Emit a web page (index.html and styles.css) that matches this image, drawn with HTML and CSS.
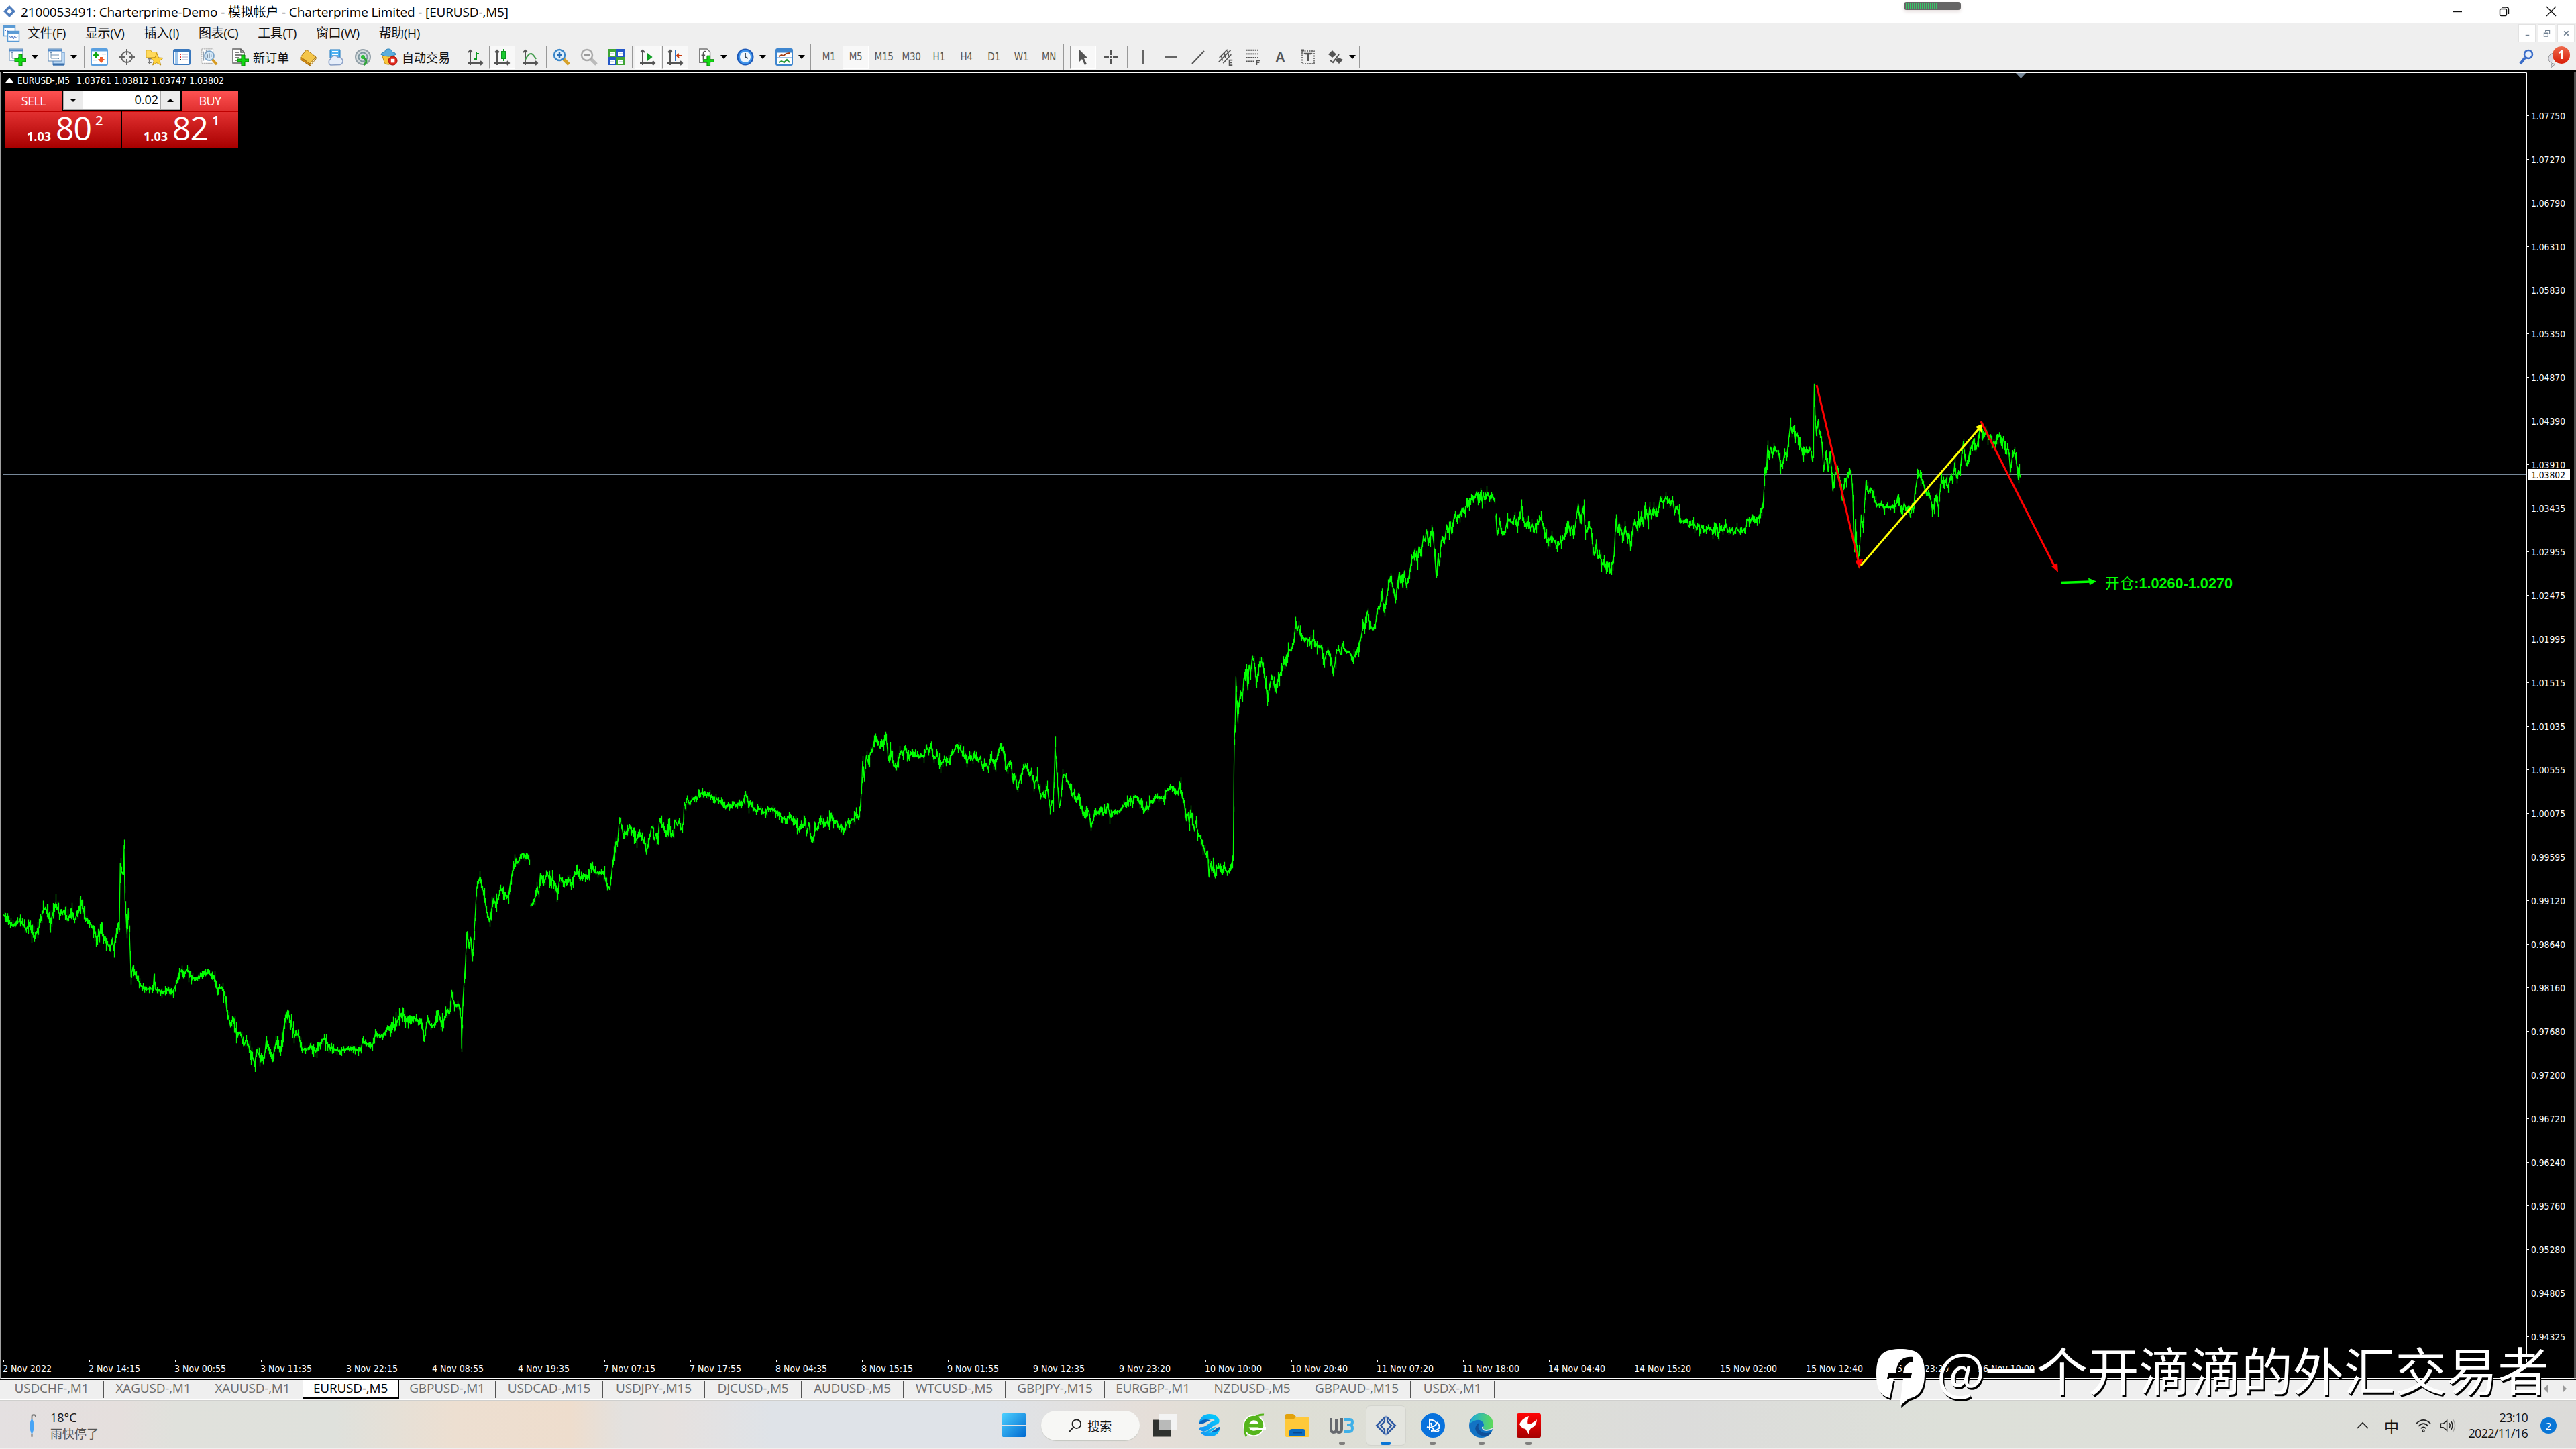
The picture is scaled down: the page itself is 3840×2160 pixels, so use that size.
FILE: index.html
```html
<!DOCTYPE html>
<html lang="zh-CN">
<head>
    <meta charset="UTF-8">
    <title>2100053491: Charterprime-Demo - [EURUSD-,M5]</title>
    <link rel="stylesheet" href="styles.css">
</head>
<body>
    <!-- Title bar -->
    <div class="titlebar">
        <svg class="app-icon" viewBox="0 0 20 20"><path d="M10 1l9 9-9 9-9-9z" fill="#4f7dbd"/><path d="M10 6l4 4-4 4-4-4z" fill="#fff"/></svg>
        <span class="title-text">2100053491: Charterprime-Demo - 模拟帐户 - Charterprime Limited - [EURUSD-,M5]</span>
        <div class="window-buttons">
            <svg viewBox="0 0 16 16"><path d="M1 8.500h14"/></svg>
            <svg viewBox="0 0 16 16"><rect x="1.500" y="4.500" width="10" height="10" rx="2"/><path d="M4 2h7q3.500 0 3.500 3.500V12"/></svg>
            <svg viewBox="0 0 16 16"><path d="M1 1l14 14M15 1L1 15"/></svg>
        </div>
    </div>
    <div class="meter"><span></span></div>

    <!-- Menu bar -->
    <div class="menubar">
        <svg class="menu-icon" viewBox="0 0 26 26"><g fill="#fff" stroke="#5b9bd5" stroke-width="1.500"><rect x="1.500" y="1.500" width="17" height="15"/><rect x="7.500" y="9.500" width="17" height="15"/></g><path d="M1 3.500h18M7 11.500h18" stroke="#5b9bd5" stroke-width="3"/><path d="M10 16l2 4 2-3 2 4 2-5 2 4 2-3M4 9l2-2 2 3 3-3" fill="none" stroke="#4472c4"/></svg>
        <span>文件(F)</span>
        <span>显示(V)</span>
        <span>插入(I)</span>
        <span>图表(C)</span>
        <span>工具(T)</span>
        <span>窗口(W)</span>
        <span>帮助(H)</span>
        <div class="mdi-buttons">
            <b><svg viewBox="0 0 12 12"><path d="M3 9.500h6" stroke-width="2"/></svg></b>
            <b><svg viewBox="0 0 12 12"><path d="M4 4V1.500h6.500V7H8M1.500 5.500H8V11H1.500zM1.500 6.500H8" stroke-width="1.200"/></svg></b>
            <b><svg viewBox="0 0 12 12"><path d="M2.500 2.500l7 7M9.500 2.500l-7 7" stroke-width="2"/></svg></b>
        </div>
    </div>

    <!-- Toolbar -->
    <div class="toolbar">
        <i class="grip"></i>
        <div class="drop">
            <svg viewBox="0 0 26 26"><rect x="1" y="1" width="20" height="17" fill="#fff" stroke="#5b87b5"/><path d="M1 3h20" stroke="#4a86c8" stroke-width="3"/><path d="M5 6v9h11M3 8l2-2 2 2M14 13l2 2-2 2" fill="none" stroke="#6d8fb0"/><path d="M15 9h5v6h6v5h-6v6h-5v-6H9v-5h6z" fill="#12d812" stroke="#078007"/></svg>
            <em></em>
        </div>
        <div class="drop">
            <svg viewBox="0 0 26 26"><path d="M8 6h17v19H8z" fill="#bcd9f5" stroke="#4a86c8"/><path d="M8 24h17" stroke="#3a6faa" stroke-width="3"/><rect x="1" y="1" width="20" height="18" fill="#fff" stroke="#5b87b5"/><path d="M1 3h20" stroke="#4a86c8" stroke-width="3"/><path d="M5 6v9h12M3 8l2-2 2 2M5 10h12M15 13l2 2-2 2" fill="none" stroke="#6d8fb0"/></svg>
            <em></em>
        </div>
        <i class="sep w5"></i>
        <div class="btn"><svg viewBox="0 0 26 26"><rect x="1" y="1" width="24" height="24" rx="2" fill="#fff" stroke="#5ba0e0" stroke-width="2"/><path d="M1 3h24" stroke="#5ba0e0" stroke-width="3"/><path d="M8 5l5 6h-3v3H6v-3H3z" fill="#12a812"/><path d="M16 22l5-6h-3v-3h-4v3h-3z" fill="#f05a28"/><path d="M3 18h6M17 9h6" stroke="#cde"/></svg></div>
        <div class="btn"><svg viewBox="0 0 26 26" fill="none" stroke="#666" stroke-width="2"><circle cx="13" cy="13" r="8"/><path d="M13 1v9M13 16v9M1 13h9M16 13h9"/></svg></div>
        <div class="btn"><svg viewBox="0 0 28 26"><path d="M1 2h7l2 3h8v9H1z" fill="#ffd95a" stroke="#c99a1a"/><path d="M6 15v9M4 16h8M4 22h6" stroke="#777" stroke-dasharray="2 1.500" stroke-width="1.500"/><path d="M18 7l3 7 7 .6-5.300 4.700L24.500 26 18 22.300 11.500 26l1.800-6.700L8 14.600l7-.6z" fill="#ffd23c" stroke="#b98a10"/></svg></div>
        <div class="btn"><svg viewBox="0 0 26 26"><rect x="1" y="2" width="24" height="22" rx="2" fill="#fff" stroke="#3a78bd" stroke-width="2"/><path d="M1 4h24" stroke="#3a78bd" stroke-width="3"/><path d="M3 6h4v17H3z" fill="#9fc6ec"/><path d="M10 9h2M10 13h2" stroke="#e33" stroke-width="2"/><path d="M10 17h2" stroke="#222" stroke-width="2"/><path d="M14 9h8M14 13h8M14 17h8" stroke="#aac"/></svg></div>
        <div class="btn"><svg viewBox="0 0 28 28"><path d="M2 1h18v23H2z" fill="#fff" stroke="#999" stroke-dasharray="2 1"/><path d="M5 5v15M9 3v13" stroke="#789"/><circle cx="14" cy="12" r="7.500" fill="#cfe5f7" fill-opacity=".9" stroke="#7aa3c8" stroke-width="2"/><path d="M14 8v8M11 10v5M17 10v4" stroke="#567"/><path d="M19 18l7 8" stroke="#d69a20" stroke-width="4"/></svg></div>
        <i class="sep w7"></i>
        <div class="btn-text w99"><span class="ico"><svg viewBox="0 0 26 26"><path d="M2 1h12l5 5v16H2z" fill="#fff" stroke="#666" stroke-width="1.500"/><path d="M14 1v5h5M5 6h6M5 10h10M5 14h7M5 18h5" fill="none" stroke="#555" stroke-width="1.500"/><path d="M15 10h5v6h6v4h-6v6h-5v-6h-6v-4h6z" fill="#12d812" stroke="#078007"/></svg></span>新订单</div>
        <div class="btn"><svg viewBox="0 0 26 26"><path d="M11 2l14 11-9 10L2 13z" fill="#f4c64a" stroke="#a87412"/><path d="M2 13l14 10v3L2 17z" fill="#d28a14" stroke="#a87412"/><path d="M16 23l9-10v3l-9 10z" fill="#fff3c4" stroke="#a87412"/></svg></div>
        <div class="btn"><svg viewBox="0 0 26 26"><path d="M5 2h15v13H5z" fill="#4fb2f3" stroke="#1c78c0"/><path d="M8 5h9M8 9h9" stroke="#fff" stroke-width="2"/><path d="M6 25a5 5 0 010-9 6 6 0 0111-2 5 5 0 013 10.500z" fill="#e6eefa" stroke="#8aa0c6" stroke-width="1.500"/></svg></div>
        <div class="btn"><svg viewBox="0 0 26 26" fill="none"><circle cx="13" cy="13" r="11" fill="#d6dde0" stroke="#93a0a8" stroke-width="2"/><circle cx="13" cy="13" r="6.500" stroke="#7d97a0" stroke-width="2"/><circle cx="13" cy="13" r="3" fill="#2fbf3a"/><path d="M14 14q8 5 0 11" stroke="#2fa338" stroke-width="3"/></svg></div>
        <div class="btn-text w116"><span class="ico"><svg viewBox="0 0 28 28"><path d="M3 12h20l-4 12q-6 4-12 0z" fill="#f8c63c" stroke="#b8860b"/><path d="M1 10q1-4 6-4 1-5 6-5t6 5q5 0 6 4-12 6-24 0z" fill="#5aaede" stroke="#2a7fb5"/><circle cx="20" cy="20" r="7" fill="#e0261a" stroke="#a01008"/><path d="M17 17h6v6h-6z" fill="#fff"/></svg></span>自动交易</div>
        <i class="sep w11 gripped"></i>
        <div class="btn"><svg viewBox="0 0 26 26" fill="none" stroke="#555" stroke-width="2"><path d="M5 3v22M1 22h22M2 6l3-3 3 3M20 19l3 3-3 3"/><path d="M14 6v12M14 8h4M10 16h4" stroke="#0c9a20"/></svg></div>
        <div class="btn pressed"><svg viewBox="0 0 26 26" fill="none" stroke="#555" stroke-width="2"><path d="M5 3v22M1 22h22M2 6l3-3 3 3M20 19l3 3-3 3"/><path d="M15 1v18" stroke="#0c9a20"/><path d="M12 5h6v10h-6z" fill="#19c92e" stroke="#0c9a20"/></svg></div>
        <div class="btn"><svg viewBox="0 0 26 26" fill="none" stroke="#555" stroke-width="2"><path d="M5 3v22M1 22h22M2 6l3-3 3 3M20 19l3 3-3 3"/><path d="M5 17q5-10 9-9 3 1 7 8" stroke="#3f9a4a"/></svg></div>
        <i class="sep w5"></i>
        <div class="btn"><svg viewBox="0 0 26 26"><path d="M16 16l8 8" stroke="#d6a12a" stroke-width="5"/><circle cx="10" cy="10" r="8" fill="#dff0fc" stroke="#3a86c8" stroke-width="2.500"/><path d="M6 10h8M10 6v8" stroke="#2a70b8" stroke-width="2.500"/></svg></div>
        <div class="btn"><svg viewBox="0 0 26 26"><path d="M16 16l8 8" stroke="#bbb" stroke-width="5"/><circle cx="10" cy="10" r="8" fill="#f2f2f2" stroke="#aaa" stroke-width="2.500"/><path d="M6 10h8" stroke="#999" stroke-width="2.500"/></svg></div>
        <div class="btn"><svg viewBox="0 0 26 26"><path d="M1 1h12v12H1zM13 13h12v12H13z" fill="#3fa535"/><path d="M13 1h12v12H13zM1 13h12v12H1z" fill="#2458c8"/><path d="M3 6h8v5H3zM15 6h8v5h-8zM3 18h8v5H3zM15 18h8v5h-8z" fill="#fff"/><path d="M4 8h6M16 8h6M4 20h6M16 20h6" stroke="#9bc"/></svg></div>
        <i class="sep w7"></i>
        <div class="btn pressed"><svg viewBox="0 0 26 26" fill="none" stroke="#555" stroke-width="2"><path d="M5 3v22M1 22h22M2 6l3-3 3 3M20 19l3 3-3 3"/><path d="M13 9v8l5-4z" fill="#19c92e" stroke="#0c9a20"/></svg></div>
        <div class="btn pressed"><svg viewBox="0 0 26 26" fill="none" stroke="#555" stroke-width="2"><path d="M5 3v22M1 22h22M2 6l3-3 3 3M20 19l3 3-3 3"/><path d="M13 3v16" stroke="#2a70c8"/><path d="M22 11h-7M18 8l-3 3 3 3" stroke="#c8380a"/></svg></div>
        <i class="sep w5"></i>
        <div class="drop"><svg viewBox="0 0 26 28"><path d="M2 1h12l5 5v17H2z" fill="#fff" stroke="#777" stroke-width="1.500"/><path d="M12 5q-4-1-4 4v9M5 11h6" fill="none" stroke="#555" stroke-width="1.500"/><path d="M14 12h5v6h6v4h-6v6h-5v-6H8v-4h6z" fill="#12d812" stroke="#078007"/></svg><em></em></div>
        <div class="drop"><svg viewBox="0 0 26 26"><circle cx="13" cy="13" r="12.500" fill="#1c58b8"/><circle cx="13" cy="13" r="10.500" fill="#3f93ea"/><circle cx="13" cy="13" r="8" fill="#eef6fd"/><path d="M13 7v6l4 2" fill="none" stroke="#345" stroke-width="1.800"/></svg><em></em></div>
        <div class="drop"><svg viewBox="0 0 26 26"><rect x="1" y="1" width="24" height="24" rx="2" fill="#fff" stroke="#3f86cf" stroke-width="2"/><path d="M1 4h24" stroke="#3f86cf" stroke-width="5"/><path d="M1 14h24" stroke="#3f86cf"/><path d="M5 12l4-2 3 1 4-3 5-1" fill="none" stroke="#a33a10" stroke-width="2"/><path d="M5 21l4-2 4 2 4-4 4 4" fill="none" stroke="#2a9a3a" stroke-width="2"/></svg><em></em></div>
        <i class="sep w8 gripped"></i>
        <div class="btn tf">M1</div>
        <div class="btn tf pressed">M5</div>
        <div class="btn tf">M15</div>
        <div class="btn tf">M30</div>
        <div class="btn tf">H1</div>
        <div class="btn tf">H4</div>
        <div class="btn tf">D1</div>
        <div class="btn tf">W1</div>
        <div class="btn tf">MN</div>
        <i class="sep w11 gripped"></i>
        <div class="btn pressed"><svg viewBox="0 0 26 26"><path d="M6 1v20l5-5 4 9 3-1.500-4-8.500h6z" fill="#555"/></svg></div>
        <div class="btn"><svg viewBox="0 0 26 26" stroke="#555" stroke-width="2"><path d="M12 2v8M12 16v8M1 13h8M15 13h8M11 13h2"/></svg></div>
        <i class="sep w6"></i>
        <div class="btn"><svg viewBox="0 0 26 26" stroke="#555" stroke-width="1.800"><path d="M13 3v20"/></svg></div>
        <div class="btn"><svg viewBox="0 0 26 26" stroke="#555" stroke-width="1.800"><path d="M4 13h19"/></svg></div>
        <div class="btn"><svg viewBox="0 0 26 26" stroke="#555" stroke-width="2"><path d="M4 23L22 4"/></svg></div>
        <div class="btn"><svg viewBox="0 0 26 28" fill="none" stroke="#555" stroke-width="1.800"><path d="M2 22L21 3M3 15L16 2M9 24L22 10M6 12l2 8M11 8l2 8M16 4l2 8"/><path d="M24 19h-5v8h5M19 23h4"/></svg></div>
        <div class="btn"><svg viewBox="0 0 26 28" fill="none" stroke="#555" stroke-width="2"><path d="M2 3h21M2 9h21M2 15h21M2 21h13" stroke-dasharray="2 1.500"/><path d="M24 20h-5v7M19 23h4" stroke-width="1.500"/></svg></div>
        <div class="btn letter">A</div>
        <div class="btn"><svg viewBox="0 0 26 26" fill="none" stroke="#555" stroke-width="1.500"><path d="M4 4h18v19H4z" stroke-dasharray="2 1.500"/><path d="M8 9V8h10v1M13 8v11" stroke-width="2.500"/><path d="M2 3h5" stroke-width="3"/></svg></div>
        <div class="btn"><svg viewBox="0 0 26 26"><path d="M8 3l6 6-6 5-6-5zM18 23l-6-6 6-3 6 3z" fill="#555"/><path d="M5 18l4 3 9-12" fill="none" stroke="#555" stroke-width="2"/></svg></div>
        <em class="last-drop"></em>
        <i class="sep w8"></i>
        <div class="toolbar-right">
            <svg viewBox="0 0 24 24"><path d="M9 13l-7 9" stroke="#3a6cc8" stroke-width="4"/><circle cx="14" cy="8" r="6" fill="#e8f0fc" stroke="#3a6cc8" stroke-width="2.500"/></svg>
            <div class="notice"><svg viewBox="0 0 30 30"><path d="M14 5a11 9 0 100 18l-7 6 1-6" fill="#dcdce4" stroke="#888"/></svg><b>1</b></div>
        </div>
    </div>

    <!-- Chart window -->
    <div class="chart-window">
        <svg id="chart" class="chart" width="3840" height="1948" viewBox="0 107 3840 1948">
            <path class="frame" d="M4.500 2026V108.500H3766.500V2030M4 2027.500H3767"/>
            <path class="window-edge" d="M1 107V2055M3838.500 107V2055"/>
            <path d="M3005 109h15l-7.500 8z" fill="#778899"/>
            <path class="price-line" d="M5 707.500H3766"/>
            <path id="bars" class="bars"/>
            <g id="scales" class="scales"></g>
            <rect x="3768" y="699" width="63" height="17" fill="#fff"/>
            <text class="price-now" x="3773" y="713" textLength="51" lengthAdjust="spacingAndGlyphs">1.03802</text>
            <g class="trend">
                <path class="down" d="M2708 574L2771 840"/><path class="down-head" d="M2772 848l-6.500-12 12-3z"/>
                <path class="up" d="M2774 843L2950 639"/><path class="up-head" d="M2955 632l-10 4 9 9z"/>
                <path class="down" d="M2953 628L3063 845"/><path class="down-head" d="M3068 853l-10-9 9-5z"/>
                <path class="entry" d="M3072 868.500L3117 867"/><path class="entry-head" d="M3125 866.500l-12-5 2 11z"/>
            </g>
            <text class="entry-text" x="3138" y="877" textLength="190" lengthAdjust="spacingAndGlyphs"><tspan class="thin">开仓</tspan>:1.0260-1.0270</text>
            <path d="M8 123l6-7 6 7z" fill="#fff"/>
            <text class="symbol-line" x="26" y="125" textLength="78" lengthAdjust="spacingAndGlyphs">EURUSD-,M5</text>
            <text class="symbol-line" x="114" y="125" textLength="220" lengthAdjust="spacingAndGlyphs">1.03761 1.03812 1.03747 1.03802</text>
        </svg>

        <!-- One click trading panel -->
        <div class="trade">
            <div class="trade-top">
                <span class="side">SELL</span>
                <div class="lots"><b class="dn"></b><span>0.02</span><b class="upb"></b></div>
                <span class="side">BUY</span>
            </div>
            <div class="trade-bottom">
                <div class="quote"><small>1.03</small><big>80</big><sup>2</sup></div>
                <div class="quote"><small>1.03</small><big>82</big><sup>1</sup></div>
            </div>
        </div>
    </div>

    <!-- Chart tabs -->
    <div class="tabs">
        <span class="t154">USDCHF-,M1</span>
        <span class="t148">XAGUSD-,M1</span>
        <span class="t148 before">XAUUSD-,M1</span>
        <span class="t144 active">EURUSD-,M5</span>
        <span class="t144">GBPUSD-,M1</span>
        <span class="t160">USDCAD-,M15</span>
        <span class="t152">USDJPY-,M15</span>
        <span class="t144">DJCUSD-,M5</span>
        <span class="t152">AUDUSD-,M5</span>
        <span class="t152">WTCUSD-,M5</span>
        <span class="t148">GBPJPY-,M15</span>
        <span class="t144">EURGBP-,M1</span>
        <span class="t152">NZDUSD-,M5</span>
        <span class="t160">GBPAUD-,M15</span>
        <span class="t125">USDX-,M1</span>
        <svg class="tab-arrows" viewBox="0 0 36 12"><path d="M6 0v12L0 6zM28 0v12l6-6z"/></svg>
    </div>

    <!-- Taskbar -->
    <div class="taskbar">
        <div class="weather">
            <svg viewBox="0 0 14 36"><path d="M7 8V4q0-3 3-3t3 3" fill="none" stroke="#777" stroke-width="2"/><path d="M7 6q7 12 0 27Q0 18 7 6z" fill="#48a4f5"/><path d="M7 31v5" stroke="#555" stroke-width="2"/></svg>
            <div>
                <p>18°C</p>
                <p class="dim">雨快停了</p>
            </div>
        </div>

        <div class="apps">
            <svg class="app" viewBox="0 0 36 36"><defs><linearGradient id="win" x1="0" y1="0" x2="1" y2="1"><stop offset="0" stop-color="#4cd0ff"/><stop offset="1" stop-color="#0069d0"/></linearGradient></defs><path d="M1 0h16v17H0V1zM18 0h16l1 1v16H18zM0 18h17v17H1l-1-1zM18 18h17v16l-1 1H18z" fill="url(#win)"/></svg>
            <div class="search"><svg viewBox="0 0 22 22"><circle cx="13" cy="8.500" r="7"/><path d="M8 13.500L1 21"/></svg>搜索</div>
            <svg class="app" viewBox="0 0 36 36"><path d="M0 9.500h27v25H0z" fill="#30322f"/><path d="M9 1h27v23H9z" fill="#f4f4f4" fill-opacity=".96"/><path d="M9 10h18v14H9z" fill="#b9bab9"/></svg>
            <svg class="app" viewBox="0 0 36 36"><defs><linearGradient id="bird" x1="0" y1="1" x2="1" y2="0"><stop offset="0" stop-color="#1a8cf0"/><stop offset="1" stop-color="#00d4ff"/></linearGradient></defs><path d="M2 15Q5 1 18 1q10 0 14 7 2 5-2 8-4 1-8 4-7 6-13 7l-7-3q0-3 3-4 6 1 12-5 5-4 9-5-6-3-12 1-6 5-12 4z" fill="url(#bird)"/><path d="M34 20Q32 34 19 34 9 35 4 27q8 1 14-3 6-4 10-4-3 5-12 8 8 1 14-4-2-3 4-4z" fill="url(#bird)"/><path d="M2 15q4-6 10-6l8 1q-4 1-7 3-5 3-11 2zM34 20q-1 5-6 7l-12 1q6-1 10-4 4-4 8-4z" fill="#0a62bd"/></svg>
            <svg class="app" viewBox="0 0 36 36"><circle cx="18" cy="18" r="16" fill="#fff"/><circle cx="18" cy="18" r="11" fill="none" stroke="#55b51c" stroke-width="6.500"/><path d="M9 18h22" stroke="#55b51c" stroke-width="5"/><path d="M20 23h15v-3" stroke="#fff" stroke-width="4" fill="none"/><path d="M7 34Q1 22 13 11 24 1 33 2" fill="none" stroke="#55b51c" stroke-width="3"/></svg>
            <svg class="app" viewBox="0 0 36 36"><path d="M0 3q0-2 2-2h10l4 4h18v8H0z" fill="#e2a20c"/><path d="M0 8h13l3-3h18q2 0 2 2v26q0 2-2 2H2q-2 0-2-2z" fill="#ffc93a"/><path d="M6 34v-7q0-4 4-4h16q4 0 4 4v7z" fill="#0a6cc4"/><path d="M11 28.500h14" stroke="#084a92" stroke-width="2"/></svg>
            <div class="running"><svg class="app" viewBox="0 0 36 36" fill="none" stroke-width="4"><path d="M2 7v16q0 5 4 5t4-5V9v14q0 5 4 5t4-5V7" stroke="#66696e"/><path d="M21 9h9q4 0 4 4t-4 4h-4 4q4 0 4 5t-5 5h-8" stroke="#3fb0e8"/></svg></div>
            <div class="running current"><svg class="app" viewBox="0 0 36 36" fill="none" stroke="#2c57a0" stroke-width="2.200"><path d="M18 5l13 13-13 13L5 18z" stroke="#8ca6d0"/><path d="M16 6L4 18l12 12V24l-6-6 6-6zM20 6l12 12-12 12V24l6-6-6-6z"/></svg></div>
            <div class="running a3"><svg class="app" viewBox="0 0 36 36" fill="none" stroke="#fff" stroke-width="2"><circle cx="18" cy="18" r="18" fill="#0872dd" stroke="none"/><path d="M13 24V9q8 1 10 5 1 3-4 5-5 3-10 1M15 14q1 7 6 12 4 2 6-1M24 13q5 5 3 9-5 4-12 4"/></svg></div>
            <div class="running a4"><svg class="app" viewBox="0 0 36 36"><defs><linearGradient id="edge" x1="0" y1="0" x2="1" y2="0"><stop offset="0" stop-color="#1ba9dd"/><stop offset="1" stop-color="#5fdc55"/></linearGradient></defs><circle cx="18" cy="18" r="18" fill="#1273c4"/><path d="M1 15Q5 0 18 0q17 1 18 16 0 8-10 8-6 0-5-4 2-3 0-6Q15 5 1 15z" fill="url(#edge)"/><path d="M13 15q-7 6-1 14 6 6 16 4 4-2 6-6-9 4-16 0-7-5-3-13z" fill="#10509a"/><path d="M20 20q-1 5 6 5 5 0 9-3" fill="none" stroke="#dde3e0" stroke-width="2"/></svg></div>
            <div class="running a5"><svg class="app" viewBox="0 0 36 36"><defs><linearGradient id="red" x1="0" y1="0" x2="0" y2="1"><stop offset="0" stop-color="#ff0505"/><stop offset="1" stop-color="#a50000"/></linearGradient></defs><rect width="36" height="36" rx="3" fill="url(#red)"/><path d="M18 4q-3 9-1 12 7-1 13-7-1 10-7 12-4 1-5 10l-5-8q-6-1-9-7 3-8 14-12z" fill="#fff"/></svg></div>
        </div>

        <div class="tray">
            <svg class="chev" viewBox="0 0 18 12"><path d="M1 10l8-8 8 8"/></svg>
            <span class="ime">中</span>
            <svg class="wifi" viewBox="0 0 26 22"><path d="M2 8q11-11 22 0M5.500 12q7.500-8 15 0M9 15.500q4-4 8 0"/><circle cx="13" cy="19" r="1.500"/></svg>
            <svg class="vol" viewBox="0 0 26 22"><path d="M1.500 8v6h4l6 5V3l-6 5zM15 7q3 4 0 8M18 4q5 7 0 14"/><path d="M21 1q7 10 0 20" opacity=".3"/></svg>
            <div class="clock"><p>23:10</p><p>2022/11/16</p></div>
            <b class="count">2</b>
        </div>
    </div>

    <!-- Author mark over the chart corner -->
    <div class="author">
        <svg viewBox="0 0 74 90"><path d="M36 1C62 1 72 10 72 37S62 72 48 75L35 86l5-41H51l2-8H40C41 28 45 21 54 20l1-7C38 11 31 20 29 37H18l-2 8H26l-6 29C5 70 0 60 0 37 0 10 10 1 36 1z"/></svg>
        <span>@一个开滴滴的外汇交易者</span>
    </div>

    <script src="chart.js"></script>
</body>
</html>
```

FILE: styles.css
```css
* {
    box-sizing: border-box;
}

body {
    margin: 0;
    width: 3840px;
    height: 2160px;
    overflow: hidden;
    background: #efefef;
    font-family: "Open Sans", "Noto Sans CJK SC", sans-serif;
    font-size: 18px;
    color: #111;
}

p {
    margin: 0;
}

svg {
    display: block;
    flex: none;
}

/* Title bar */
.titlebar {
    display: flex;
    align-items: center;
    height: 34px;
    padding-left: 4px;
    background: #fff;
    color: #000;
}

.app-icon {
    width: 20px;
    height: 20px;
    margin-right: 7px;
}

.title-text {
    font-size: 19px;
    letter-spacing: -0.15px;
    white-space: nowrap;
}

.window-buttons {
    display: flex;
    gap: 54px;
    margin-left: auto;
    padding-right: 29px;
}

.window-buttons svg {
    width: 16px;
    height: 16px;
    fill: none;
    stroke: #111;
    stroke-width: 1.4;
}

/* Small level meter floating on top of the window */
.meter {
    position: absolute;
    left: 2838px;
    top: 3px;
    width: 85px;
    height: 12px;
    padding: 1px 3px;
    border-radius: 4px;
    background: #666;
    box-shadow: 0 3px 5px #e8e0e0;
}

.meter span {
    display: block;
    width: 46px;
    height: 9px;
    background: repeating-linear-gradient(90deg, #35c766 0, #35c766 1px, #666 1px, #666 3px);
}

/* Menu bar */
.menubar {
    display: flex;
    align-items: center;
    gap: 29px;
    height: 32px;
    padding-left: 4px;
    background: #efefef;
    border-bottom: 1px solid #979797;
}

.menubar span {
    padding-bottom: 3px;
    font-size: 19px;
    letter-spacing: -0.4px;
    white-space: nowrap;
}

.menu-icon {
    width: 26px;
    height: 26px;
    margin-right: -18px;
}

.mdi-buttons {
    display: flex;
    gap: 3px;
    margin-left: auto;
    padding-right: 2px;
}

.mdi-buttons b {
    display: flex;
    align-items: center;
    justify-content: center;
    width: 26px;
    height: 27px;
    background: #fff;
    border: 1px solid #e2e2e2;
}

.mdi-buttons svg {
    width: 11px;
    height: 11px;
    fill: none;
    stroke: #6f7f90;
}

/* Toolbar */
.toolbar {
    display: flex;
    align-items: center;
    height: 39px;
    border-bottom: 1px solid #777;
    background: #efefef;
}

.grip {
    width: 3px;
    height: 34px;
    margin: 0 1px 0 2px;
    background: repeating-linear-gradient(#999 0, #999 1px, #efefef 1px, #efefef 3px);
}

.btn,
.drop {
    display: flex;
    align-items: center;
    justify-content: center;
    width: 41px;
    height: 35px;
}

.btn svg,
.drop svg,
.ico svg {
    width: 26px;
    height: 26px;
}

.drop {
    width: 58px;
    justify-content: flex-start;
    padding-left: 7px;
}

.drop em,
.last-drop {
    margin-left: 8px;
    border: 5px solid transparent;
    border-top: 6px solid #000;
    border-bottom: 0;
}

.last-drop {
    margin: 0 2px 0 0;
}

.pressed {
    background: #f8f8f8;
    border: 1px solid #fff;
    border-top-color: #999;
    border-left-color: #999;
    margin-right: 2px;
    width: 39px;
}

.btn-text {
    display: flex;
    align-items: center;
    white-space: nowrap;
    height: 35px;
}

.ico {
    display: flex;
    justify-content: center;
    width: 38px;
}

.tf {
    font-family: "DejaVu Sans Condensed", "DejaVu Sans", sans-serif;
    font-stretch: condensed;
    font-size: 15px;
    color: #555;
    letter-spacing: -0.3px;
}

.letter {
    font-family: "Liberation Sans", sans-serif;
    font-size: 20px;
    font-weight: bold;
    color: #555;
}

.sep {
    height: 34px;
    background: linear-gradient(#999, #999) 3px 0 / 1px 100% no-repeat;
}

.gripped {
    height: 38px;
    background: linear-gradient(#999, #999) 1px 0 / 1px 100% no-repeat,
        repeating-linear-gradient(#999 0, #999 1px, #efefef 1px, #efefef 3px) 5px 2px / 3px 100% no-repeat;
}

.w5 { width: 5px; }
.w6 { width: 6px; }
.w7 { width: 7px; }
.w8 { width: 8px; }
.w11 { width: 11px; }
.w99 { width: 99px; }
.w116 { width: 116px; }

.toolbar-right {
    display: flex;
    align-items: center;
    gap: 17px;
    margin-left: auto;
    padding-right: 8px;
}

.toolbar-right > svg {
    width: 24px;
    height: 24px;
}

.notice {
    position: relative;
    width: 36px;
    height: 32px;
}

.notice svg {
    width: 28px;
    height: 28px;
    margin-top: 5px;
}

.notice b {
    position: absolute;
    right: 1px;
    top: 0;
    width: 26px;
    height: 26px;
    border-radius: 50%;
    background: linear-gradient(#ee6a4c, #d91e08);
    color: #fff;
    font-size: 17px;
    line-height: 26px;
    text-align: center;
}

/* Chart */
.chart-window {
    position: relative;
    height: 1950px;
    padding-top: 2px;
    background: #000;
    border-bottom: 1px solid #fff;
}

.chart {
    font-family: "DejaVu Sans Condensed", "DejaVu Sans", sans-serif;
    font-size: 13.5px;
    font-stretch: condensed;
}

.frame {
    fill: none;
    stroke: #fff;
}

.window-edge {
    stroke: #a0a0a0;
    stroke-width: 2;
}

.price-line {
    stroke: #778899;
}

.bars {
    fill: none;
    stroke: #00ff00;
    stroke-width: 1.25;
}

.scales text,
.symbol-line {
    fill: #fff;
}

.scales path {
    stroke: #fff;
}

.price-now {
    fill: #000;
}

.trend path {
    fill: none;
    stroke-width: 3;
}

.trend .down { stroke: #f00; }
.trend .up { stroke: #ff0; }
.trend .entry { stroke: #0f0; stroke-width: 3.5; }
.trend .down-head { fill: #f00; }
.trend .up-head { fill: #ff0; }
.trend .entry-head { fill: #0f0; }

.entry-text {
    fill: #0f0;
    font-family: "Liberation Sans", "Noto Sans CJK SC", sans-serif;
    font-size: 21.5px;
    font-weight: bold;
}

.thin {
    font-weight: 400;
}

/* One click trading */
.trade {
    position: absolute;
    left: 8px;
    top: 30px;
    width: 347px;
    color: #fff;
}

.trade-top,
.trade-bottom {
    display: flex;
    justify-content: space-between;
}

.side {
    width: 84px;
    height: 31px;
    background: linear-gradient(#ff5252, #e03030);
    border-bottom: 1px solid #ff9c9c;
    font-size: 18px;
    line-height: 30px;
    text-align: center;
    letter-spacing: -0.6px;
}

.lots {
    display: flex;
    width: 175px;
    height: 29px;
    background: #fff;
    border: 1px solid #aaa;
    color: #000;
}

.lots span {
    flex: 1;
    padding-right: 3px;
    text-align: right;
    line-height: 25px;
    border: solid #aaa;
    border-width: 0 1px;
}

.lots b {
    display: flex;
    align-items: center;
    justify-content: center;
    width: 28px;
    background: #ebebeb;
}

.dn::before,
.upb::before {
    content: "";
    border: 5px solid transparent;
    border-bottom-width: 0;
    border-top-color: #000;
}

.upb::before {
    border-width: 0 5px 5px;
    border-color: transparent transparent #000;
}

.quote {
    display: flex;
    align-items: flex-end;
    width: 173px;
    height: 54px;
    padding-left: 32px;
    background: linear-gradient(#e23030, #a80000);
    border-top: 1px solid #c00000;
}

.quote small {
    width: 43px;
    font-size: 18px;
    font-weight: 700;
    line-height: 33px;
}

.quote big {
    width: 59px;
    margin-bottom: 2px;
    font-size: 48px;
    line-height: 54px;
    letter-spacing: -1px;
}

.quote sup {
    align-self: flex-start;
    font-size: 20px;
    font-weight: 600;
    line-height: 26px;
}

/* Chart tabs */
.tabs {
    display: flex;
    align-items: flex-start;
    height: 32px;
    border-top: 2px solid #000;
    border-bottom: 1px solid #fff;
    background: #efefef;
    font-size: 19px;
    color: #6b6b6b;
}

.tabs span {
    height: 28px;
    padding-right: 1px;
    line-height: 25px;
    text-align: center;
    letter-spacing: -0.2px;
    white-space: nowrap;
    background: linear-gradient(#555, #555) 100% 2px / 1px 25px no-repeat;
}

.tabs .active {
    background: #fff;
    color: #000;
    border: 1px solid #000;
    border-top: 0;
    border-bottom-width: 2px;
}

.tabs .before {
    background: none;
}

.t125 { width: 125px; }
.t144 { width: 144px; }
.t148 { width: 148px; }
.t152 { width: 152px; }
.t154 { width: 155px; }
.t160 { width: 160px; }

.tab-arrows {
    width: 36px;
    height: 12px;
    margin: 7px 12px 0 auto;
    fill: #999;
}

/* Taskbar */
.taskbar {
    display: flex;
    align-items: center;
    position: relative;
    height: 72px;
    padding-top: 2px;
    border-top: 2px solid #cfcfcd;
    background: linear-gradient(90deg, #e4e0e1 0, #e5dfdd 180px, #e0e1dc 260px, #dfe1dc 500px, #eddfd1 680px, #eeddcd 850px, #e3e1df 930px, #e6e1df 1000px, #dfe3e8 1150px, #dfe3e8 1480px, #e5ded8 1720px, #deded5 1850px, #dddfd7 2200px, #dcdcdb 2500px, #dde0d9 2900px, #dddfd9 3400px, #dcdbd9 3840px);
}

.weather {
    display: flex;
    align-items: center;
    gap: 21px;
    width: 1494px;
    padding-left: 41px;
    line-height: 24px;
}

.weather svg {
    width: 13px;
    height: 36px;
}

.dim {
    color: #555;
}

.apps {
    display: flex;
    align-items: center;
    gap: 29.7px;
}

.app {
    width: 36px;
    height: 36px;
}

.search {
    display: flex;
    align-items: center;
    justify-content: center;
    gap: 8px;
    width: 147px;
    height: 44px;
    margin: 0 -9px 0 -8px;
    border-radius: 22px;
    background: #f7f7f5;
    box-shadow: 0 1px 1px #c5c7c0;
}

.search svg {
    width: 20px;
    height: 20px;
    fill: none;
    stroke: #222;
    stroke-width: 2;
}

.running {
    display: flex;
    flex-direction: column;
    align-items: center;
    justify-content: center;
    position: relative;
    height: 58px;
}

.running::after {
    content: "";
    position: absolute;
    bottom: 0;
    width: 9px;
    height: 5px;
    border-radius: 3px;
    background: #7f7f7d;
}

.current {
    width: 58px;
    margin: 0 -11px;
    border-radius: 6px;
    background: #e4e5df;
    box-shadow: 0 0 0 1px #d3d4ce;
}

.current::after {
    width: 15px;
    background: #0a76d6;
}

.a3 { margin-left: 4px; }
.a4 { margin-left: 7px; }
.a5 { margin-left: 5px; }

.tray {
    display: flex;
    align-items: center;
    margin-left: auto;
    padding-right: 29px;
}

.tray svg {
    fill: none;
    stroke: #222;
    stroke-width: 1.6;
}

.chev {
    width: 18px;
    height: 12px;
    margin-right: 23px;
}

.ime {
    font-size: 22px;
    margin-right: 24px;
}

.wifi {
    width: 25px;
    height: 22px;
    margin-right: 12px;
}

.vol {
    width: 24px;
    height: 22px;
}

.clock {
    width: 107px;
    text-align: right;
    line-height: 23px;
    letter-spacing: -0.7px;
}

.count {
    width: 24px;
    height: 24px;
    margin-left: 19px;
    border-radius: 50%;
    background: #0a76d6;
    color: #fff;
    font-size: 15px;
    font-weight: 400;
    line-height: 24px;
    text-align: center;
}

/* Author mark */
.author {
    display: flex;
    position: absolute;
    left: 2797px;
    top: 1985px;
    color: #fff;
    white-space: nowrap;
}

.author svg {
    width: 74px;
    height: 90px;
    margin: 25px 16px 0 0;
    fill: #fff;
    overflow: visible;
    filter: drop-shadow(2px 3px 0 #000);
}

.author span {
    font-family: "Noto Sans CJK SC", sans-serif;
    font-size: 76.4px;
    line-height: 110px;
    text-shadow: 2px 3px 0 #000;
}
```

FILE: chart.js
```js
// Price runs. Each run keeps its own origin and scale, points are u,v pairs.
const runs = [
    { x: 0, y: 1180, kx: 1.568, ky: 3, pts: '8,550 18,580 30,600 38,590 48,575 60,615 68,595 80,650 90,615 102,520 108,530 118,580 130,500 138,545 152,535 157,575 167,535 174,580 180,545 191,490 199,570 206,580 215,605 226,660 236,615 245,660 255,695 262,675 266,695 276,590 279,630 281,320 286,370 289,350 290,240 292,480 297,640 300,520 303,640 306,830 311,780 318,830 330,870 336,885 358,882 360,820 363,885 382,898 390,885 404,895 412,860 420,800 430,815 437,795 447,830 460,840 470,820 486,812 500,828 508,885 520,875 527,920 530,980 538,1045 545,1010 552,1080 562,1080 569,1135 576,1110 590,1190 595,1215 600,1155 611,1205 618,1190 622,1110 630,1165 638,1185 645,1120 656,1160 665,1030 672,980 680,1040 688,1090 696,1085 706,1155 718,1150 728,1140 737,1165 743,1135 757,1105 770,1145 795,1162 808,1150 820,1148 843,1158 847,1120 870,1140 877,1085 893,1095 905,1060 912,1070 925,1035 940,990 955,1035 966,1010 985,1040 992,1105 998,1025 1008,1050 1015,1040 1024,990 1032,1045 1045,985 1052,985 1055,905 1062,955 1072,950 1078,1020 1079,1148 1082,930 1088,760 1091,630 1096,700 1100,650 1104,760 1108,650 1114,430 1121,385 1130,450 1137,530 1144,585 1153,480 1160,510 1170,435 1180,460 1188,470 1195,380 1206,300 1210,320 1218,280 1230,290 1238,310' },
    { x: 0, y: 1180, kx: 1.568, ky: 3, pts: '1240,510 1250,485 1254,430 1259,460 1263,365 1270,415 1279,360 1286,415 1291,385 1303,460 1308,385 1318,410 1330,395 1335,425 1340,380 1347,360 1355,385 1375,375 1381,330 1392,365 1410,360 1420,430 1426,430 1432,320 1440,220 1443,240 1448,115 1452,150 1457,195 1472,160 1487,215 1494,185 1503,215 1506,225' },
    { x: 960, y: 1070, kx: 1.823, ky: 3, pts: '0,540 5,595 12,565 20,490 25,490 27,545 32,520 37,555 42,455 47,470 55,500 60,520 68,465 73,530 80,520 83,460 90,480 95,460 100,500 107,470 109,380 112,395 117,360 123,385 130,365 140,355 143,365 150,340 158,335 168,345 178,345 187,360 193,375 197,365 213,378 217,400 228,388 238,395 243,380 250,395 256,382 263,395 270,370 275,340 280,360 285,395 288,380 297,405 305,415 315,405 325,425 335,410 345,405 355,415 365,435 378,450 385,460 395,435 405,460 410,470 413,455 418,505 425,480 432,490 437,450 442,520 448,470 453,535 457,560 465,500 470,495 480,450 488,480 497,465 500,480 508,435 515,470 525,465 530,500 535,475 541,510 548,485 553,465 557,480 563,455 570,455 577,425 583,455 588,400 592,300 594,195 598,270 600,240 604,170 610,205 615,155 620,150 627,90 634,100 640,130 650,115 658,85 662,150 664,195 669,150 675,190 680,215 686,230 690,190 697,155 703,160 709,135 719,175 729,155 744,175 755,170 760,170 768,135 775,150 780,130 788,185 797,165 805,215 815,185 827,200 835,165 842,150 846,130 851,120 862,150 867,160 877,195 885,170 893,190 899,170 908,195 914,175 920,225 926,205 936,225 943,180 953,215 958,190 963,140 972,130 978,165 985,230 992,200 998,210 1003,290 1009,260 1014,320 1022,270 1032,220 1038,215 1047,250 1052,240 1060,295 1068,265 1078,355 1086,330 1090,355 1095,305 1104,410 1108,370 1112,390 1116,190 1117,115 1121,230 1128,400 1133,360 1138,260 1143,255 1150,280 1157,310 1165,355 1168,330 1173,365 1180,350 1188,390 1193,440 1203,410 1210,425 1214,485 1220,465 1225,415 1235,430 1242,415 1248,430 1257,400 1263,410 1266,445 1275,420 1290,420 1300,400 1306,385 1310,395 1322,360 1327,385 1332,350 1340,355 1347,385 1352,360 1355,410 1360,420 1365,390 1370,410 1378,370 1383,380 1390,350 1402,360 1412,360 1418,330 1430,310 1440,320 1450,340 1456,290 1463,360 1467,370 1473,450 1478,430 1482,480 1485,410 1492,470 1495,500 1500,460 1506,530 1512,530 1520,570 1525,610 1532,600 1535,710 1538,650 1543,690 1548,650 1551,710 1556,670 1565,670' },
    { x: 1750, y: 680, kx: 1.7422, ky: 2.376, pts: '118,1450 123,1475 130,1455 138,1475 145,1465 150,1440 154,1420 156,1100 157,1000 159,940 161,780 163,870 166,940 168,890 173,830 178,860 181,790 184,770 188,750 192,830 195,740 199,770 203,715 208,720 214,800 222,740 227,725 234,770 240,830 243,870 248,810 255,780 262,825 270,790 280,755 288,720 298,690 305,685 312,650 316,590 320,620 323,600 328,635 336,650 345,645 355,665 362,645 372,675 382,675 390,725 398,690 405,705 412,760 417,745 422,690 428,685 433,705 437,665 445,690 455,695 465,718 475,690 485,650 492,590 495,610 502,550 507,585 515,615 523,600 528,540 535,530 540,490 546,555 552,500 557,460 562,425 567,455 575,510 580,455 585,410 588,450 591,420 594,465 598,410 604,465 612,410 618,360 626,345 632,370 636,320 642,350 647,290 652,300 656,260 660,310 670,260 675,310 681,430 686,350 689,390 694,300 699,290 702,310 708,245 714,270 718,235 721,275 728,210 735,220 742,210 748,185 755,195 763,155 767,170 775,140 780,150 786,125 790,160 794,135 799,160 803,135 807,155 812,135 820,145 825,138 834,165' },
    { x: 1750, y: 680, kx: 1.7422, ky: 2.376, pts: '836,210 839,280 842,270 846,230 850,270 858,275 866,225 874,230 880,240 884,215 890,245 898,220 903,175 907,225 912,245 918,230 925,255 930,240 935,265 941,240 953,220 960,255 970,305 979,285 988,300 995,325 1000,310 1010,295 1018,265 1024,240 1028,270 1032,250 1039,280 1045,215 1050,170 1055,240 1060,200 1064,175 1068,270 1078,245 1083,260 1087,310 1091,350 1096,310 1100,360 1106,350 1112,385 1116,365 1122,400 1128,380 1132,410 1138,380 1143,350 1148,220 1151,270 1155,240 1162,270 1167,295 1171,250 1178,295 1182,270 1186,330 1192,250 1196,230 1203,260 1207,220 1210,250 1214,210 1218,240 1224,175 1231,230 1235,180 1239,210 1245,185 1252,215 1257,200 1262,155 1270,165 1277,145 1285,165 1292,170 1295,150 1300,200 1303,180 1308,185 1317,230 1333,230 1337,250 1347,238 1357,255 1363,240 1365,270 1370,245 1378,265 1388,255 1396,260 1400,275 1407,245 1414,285 1418,255 1425,265 1433,240 1438,265 1450,260 1453,275 1460,255 1470,270 1484,255 1487,225 1495,232 1502,220 1512,230 1522,205 1530,165' },
    { x: 2550, y: 540, kx: 1.8447, ky: 3, pts: '144,640 147,560 149,470 152,510 155,440 157,370 160,430 165,380 170,410 175,380 180,400 186,395 192,460 197,460 203,410 209,420 215,340 219,285 224,320 228,285 233,340 238,320 245,370 255,420 262,390 270,400 275,385 280,445 283,400 284,170 285,95 288,260 291,330 295,260 300,320 305,340 311,490 316,410 323,490 328,400 332,470 336,575 342,500 348,480 355,520 362,620 366,550 374,520 382,480 388,510 391,600 393,750 396,850 398,700 402,830 406,880 410,820 414,680 418,740 423,650 427,530 433,585 438,565 443,570 448,605 456,640 463,635 472,640 477,660 483,640 492,650 500,640 504,655 510,635 515,595 520,640 526,675 532,630 538,660 545,640 549,695 553,650 558,670 561,590 566,540 570,490 578,520 585,540 590,580 600,590 606,620 610,670 619,610 627,655 631,570 635,525 643,545 648,525 652,560 660,510 666,520 671,460 676,515 681,490 686,490 691,400 695,355 699,430 705,465 712,400 718,370 722,350 727,390 733,370 738,320 743,280 750,340 757,300 763,340 770,330 776,370 785,350 795,325 800,375 805,340 811,400 816,385 820,400 824,480 829,430 835,395 840,440 846,525 848,480 851,515' }
];

// Fixed seed so the wicks are the same on each load
let seed = 7;
function rand() {
    seed = (seed * 16807) % 2147483647;
    return seed / 2147483647;
}

// One bar per pixel column: high-low span around the interpolated price
let d = '';
runs.forEach(run => {
    const pts = run.pts.split(' ').map(p => {
        const [u, v] = p.split(',').map(Number);
        return [run.x + u / run.kx, run.y + v / run.ky];
    });
    d += 'M' + pts.map(p => p[0].toFixed(1) + ' ' + p[1].toFixed(1)).join('L');
    for (let i = 0; i < pts.length - 1; i++) {
        const [x1, y1] = pts[i];
        const [x2, y2] = pts[i + 1];
        const steep = Math.min(3, Math.abs(y2 - y1) / 5);
        for (let x = Math.ceil(x1); x < x2; x++) {
            const y = y1 + (y2 - y1) * (x - x1) / (x2 - x1);
            const up = 1 + rand() * rand() * (6 + steep * 4);
            const down = 1 + rand() * rand() * (6 + steep * 4);
            d += `M${x + 0.5} ${(y - up).toFixed(1)}V${(y + down).toFixed(1)}`;
        }
    }
});
document.getElementById('bars').setAttribute('d', d);

// Price and time scales
const prices = ['1.07750', '1.07270', '1.06790', '1.06310', '1.05830', '1.05350', '1.04870', '1.04390', '1.03910', '1.03435', '1.02955', '1.02475', '1.01995', '1.01515', '1.01035', '1.00555', '1.00075', '0.99595', '0.99120', '0.98640', '0.98160', '0.97680', '0.97200', '0.96720', '0.96240', '0.95760', '0.95280', '0.94805', '0.94325'];
const times = ['2 Nov 2022', '2 Nov 14:15', '3 Nov 00:55', '3 Nov 11:35', '3 Nov 22:15', '4 Nov 08:55', '4 Nov 19:35', '7 Nov 07:15', '7 Nov 17:55', '8 Nov 04:35', '8 Nov 15:15', '9 Nov 01:55', '9 Nov 12:35', '9 Nov 23:20', '10 Nov 10:00', '10 Nov 20:40', '11 Nov 07:20', '11 Nov 18:00', '14 Nov 04:40', '14 Nov 15:20', '15 Nov 02:00', '15 Nov 12:40', '15 Nov 23:20', '16 Nov 10:00'];

let scales = '';
prices.forEach((price, i) => {
    const y = 173 + i * 65;
    scales += `<path d="M3767 ${y - 0.5}h3"/><text x="3773" y="${y + 5}" textLength="51" lengthAdjust="spacingAndGlyphs">${price}</text>`;
});
times.forEach((time, i) => {
    const x = 5 + i * 128;
    const len = time.length === 12 ? 85 : time.length === 11 ? 77 : 73;
    scales += `<path d="M${x + 0.5} 2028v3"/><text x="${x - 1}" y="2045" textLength="${len}" lengthAdjust="spacingAndGlyphs">${time}</text>`;
});
document.getElementById('scales').innerHTML = scales;
```
